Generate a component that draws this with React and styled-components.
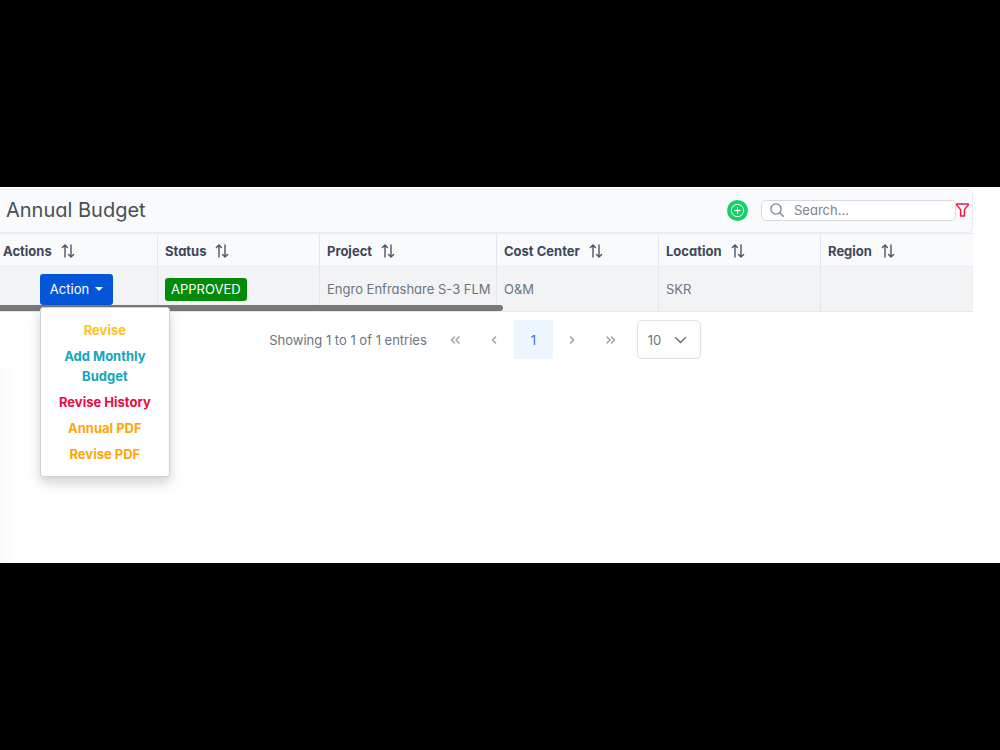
import React, { useState } from 'react';
import styled, { createGlobalStyle } from 'styled-components';

const GlobalStyle = createGlobalStyle`
  * {
    box-sizing: border-box;
  }
  body {
    margin: 0;
    background: #000;
    color: #6c757d;
    font-family: Inter, "Liberation Sans", sans-serif;
    font-size: 13px;
    font-feature-settings: "cv11";
  }
  button, input, select {
    font: inherit;
    font-feature-settings: inherit;
    color: inherit;
  }
`;

const Page = styled.div`
  display: flex;
  flex-direction: column;
  justify-content: center;
  min-height: 100vh;
`;

const Screen = styled.main`
  min-height: 376px;
  padding: 2px 27px 0 0;
  background: #fff;
  position: relative;
`;

const SideShadow = styled.div`
  position: absolute;
  left: 0;
  top: 180px;
  bottom: 0;
  width: 14px;
  background: linear-gradient(90deg, #fafafa, #fff);
`;

const Toolbar = styled.header`
  display: flex;
  align-items: center;
  height: 44px;
  padding: 0 3px 2px 6px;
  background: #f8fafc;
  border: 1px solid #e9ebee;
  border-left: 0;
  border-radius: 0 5px 5px 0;
`;

const Title = styled.h1`
  margin: 0 auto 0 0;
  font-size: 20px;
  line-height: 24px;
  font-weight: 400;
  color: #495057;
`;

const IconButton = styled.button`
  display: flex;
  padding: 0;
  border: 0;
  background: none;
  cursor: pointer;
`;

const AddButton = styled(IconButton)`
  align-items: center;
  justify-content: center;
  width: 21px;
  height: 21px;
  margin-right: 13px;
  border-radius: 50%;
  background: #13d163;
  color: #fff;
`;

const SearchBox = styled.label`
  display: flex;
  align-items: center;
  gap: 10px;
  width: 195px;
  height: 21px;
  padding: 0 8px;
  border: 1px solid #d5dae0;
  border-radius: 5px;
  background: #fff;
`;

const SearchInput = styled.input`
  flex: 1;
  min-width: 0;
  padding: 0;
  border: 0;
  outline: 0;
  background: none;
  &::placeholder {
    color: #7b838b;
    opacity: 1;
  }
`;

const TableWrap = styled.div`
  position: relative;
`;

const Table = styled.table`
  width: 100%;
  table-layout: fixed;
  border-collapse: separate;
  border-spacing: 0;
`;

const Col = styled.col`
  width: ${({ $width }) => $width ? `${$width}px` : 'auto'};
`;

const Th = styled.th`
  height: 34px;
  padding: 1px 0 0 ${({ $first }) => $first ? 3 : 7}px;
  border-top: 1px solid #e9ebee;
  border-right: ${({ $last }) => $last ? 0 : 1}px solid #e4e7eb;
  border-bottom: 1px solid #e9ebee;
  background: #f8fafc;
  color: #3f4859;
  font-weight: 700;
  text-align: left;
  white-space: nowrap;
`;

const SortLabel = styled.span`
  display: flex;
  align-items: center;
  gap: 9px;
`;

const Td = styled.td`
  height: 45px;
  padding: ${({ $center }) => $center ? '0 4px 0 0' : '0 0 0 7px'};
  border-right: ${({ $last }) => $last ? 0 : 1}px solid #e4e7eb;
  border-bottom: 1px solid #e4e7eb;
  background: #f2f3f5;
  text-align: ${({ $center }) => $center ? 'center' : 'left'};
  white-space: nowrap;
`;

const Badge = styled.span`
  display: inline-block;
  padding: 0 6px;
  border-radius: 3px;
  background: #028a0b;
  color: #fff;
  line-height: 23px;
`;

const Scrollbar = styled.div`
  position: absolute;
  left: 0;
  bottom: 1px;
  width: 503px;
  max-width: 100%;
  height: 6px;
  border-radius: 0 3px 3px 0;
  background: #77787a;
`;

const Dropdown = styled.div`
  display: inline-block;
  position: relative;
  vertical-align: middle;
`;

const ActionButton = styled.button`
  display: flex;
  align-items: center;
  gap: 6px;
  height: 31px;
  padding: 0 10px;
  border: 0;
  border-radius: 3px;
  background: #0456d8;
  color: #fff;
  cursor: pointer;
`;

const Caret = styled.span`
  border: 4px solid transparent;
  border-top-color: #fff;
  border-bottom: 0;
`;

const Menu = styled.div`
  position: absolute;
  z-index: 2;
  top: 100%;
  left: 0;
  width: 130px;
  margin-top: 2px;
  padding: 9px 0;
  border: 1px solid #cfd1d4;
  border-radius: 3px;
  background: #fff;
  box-shadow: 0 6px 12px rgba(0, 0, 0, 0.18);
  font-feature-settings: normal;
`;

const MenuItem = styled.button`
  display: block;
  width: 100%;
  padding: 3px 16px;
  border: 0;
  background: none;
  color: ${({ $color }) => $color};
  font-weight: 700;
  line-height: 20px;
  text-align: center;
  white-space: normal;
  cursor: pointer;
`;

const Paginator = styled.nav`
  display: flex;
  align-items: center;
  justify-content: center;
  padding: 8px 3px 8px 0;
`;

const Entries = styled.span`
  margin-right: 9px;
`;

const PageButton = styled.button`
  display: flex;
  align-items: center;
  justify-content: center;
  width: 39px;
  height: 39px;
  padding: 0;
  border: 0;
  background: ${({ $active }) => $active ? '#edf6ff' : 'none'};
  color: ${({ $active }) => $active ? '#3b70dc' : '#9a9fa7'};
  cursor: pointer;
`;

const SelectBox = styled.span`
  display: grid;
  align-items: center;
  margin-left: 6px;
  svg {
    grid-area: 1 / 1;
    justify-self: end;
    margin-right: 14px;
    pointer-events: none;
  }
`;

const Select = styled.select`
  grid-area: 1 / 1;
  width: 64px;
  height: 39px;
  padding: 0 0 0 10px;
  border: 1px solid #dde1e6;
  border-radius: 5px;
  background: #fff;
  appearance: none;
`;

const SortIcon = () => (
  <svg width="14" height="14" viewBox="0 0 14 14" fill="none" stroke="#4b5565" strokeWidth="1.4" strokeLinecap="round" strokeLinejoin="round">
    <path d="M4 13V1M1.4 3.4L4 .9l2.4 2.5M10 1v12M7.6 10.6l2.4 2.5 2.6-2.5" />
  </svg>
);

const PlusIcon = () => (
  <svg width="15" height="15" viewBox="0 0 15 15" fill="none" stroke="currentColor" strokeLinecap="round">
    <circle cx="7.5" cy="7.5" r="6.2" />
    <path d="M7.5 4.7v5.6M4.7 7.5h5.6" strokeWidth="1.2" />
  </svg>
);

const SearchIcon = () => (
  <svg width="14" height="14" viewBox="0 0 14 14" fill="none" stroke="#77808b" strokeWidth="1.3" strokeLinecap="round">
    <circle cx="6" cy="6" r="5.1" />
    <path d="M9.7 9.7l3.6 3.6" />
  </svg>
);

const FilterIcon = () => (
  <svg width="13" height="14" viewBox="0 0 13 14" fill="none" stroke="#f01842" strokeWidth="1.4" strokeLinejoin="round">
    <path d="M.7 1h11.6v1L8.4 6.6V13H4.6V6.6L.7 2z" />
  </svg>
);

const Chevron = ({ d, width = 12 }) => (
  <svg width={width} height="12" viewBox={`0 0 ${width} 12`} fill="none" stroke="currentColor" strokeWidth="1.5" strokeLinecap="round" strokeLinejoin="round">
    <path d={d} />
  </svg>
);

const columns = [
  { title: 'Actions', width: 158 },
  { title: 'Status', width: 162 },
  { title: 'Project', width: 177 },
  { title: 'Cost Center', width: 162 },
  { title: 'Location', width: 162 },
  { title: 'Region' },
];

const actions = [
  { title: 'Revise', color: '#ffc21f' },
  { title: 'Add Monthly Budget', color: '#10a7bb' },
  { title: 'Revise History', color: '#ea0c3f' },
  { title: 'Annual PDF', color: '#ffa50a' },
  { title: 'Revise PDF', color: '#ffa50a' },
];

export default function App() {
  const [open, setOpen] = useState(true);
  const [search, setSearch] = useState('');

  return (
    <Page>
      <GlobalStyle />
      <Screen>
        <SideShadow />
        <Toolbar>
          <Title>Annual Budget</Title>
          <AddButton aria-label="Add"><PlusIcon /></AddButton>
          <SearchBox>
            <SearchIcon />
            <SearchInput
              aria-label="Search"
              placeholder="Search..."
              value={search}
              onChange={e => setSearch(e.target.value)}
            />
          </SearchBox>
          <IconButton aria-label="Filter"><FilterIcon /></IconButton>
        </Toolbar>
        <TableWrap>
          <Table>
            <colgroup>
              {columns.map(col => <Col key={col.title} $width={col.width} />)}
            </colgroup>
            <thead>
              <tr>
                {columns.map((col, i) => (
                  <Th key={col.title} $first={i === 0} $last={i === columns.length - 1}>
                    <SortLabel>{col.title}<SortIcon /></SortLabel>
                  </Th>
                ))}
              </tr>
            </thead>
            <tbody>
              <tr>
                <Td $center>
                  <Dropdown>
                    <ActionButton aria-expanded={open} onClick={() => setOpen(!open)}>
                      Action<Caret />
                    </ActionButton>
                    {open && (
                      <Menu>
                        {actions.map(item => (
                          <MenuItem key={item.title} $color={item.color}>{item.title}</MenuItem>
                        ))}
                      </Menu>
                    )}
                  </Dropdown>
                </Td>
                <Td><Badge>APPROVED</Badge></Td>
                <Td>Engro Enfrashare S-3 FLM</Td>
                <Td>O&amp;M</Td>
                <Td>SKR</Td>
                <Td $last />
              </tr>
            </tbody>
          </Table>
          <Scrollbar />
        </TableWrap>
        <Paginator aria-label="Pagination">
          <Entries>Showing 1 to 1 of 1 entries</Entries>
          <PageButton aria-label="First page"><Chevron d="M5.5 3l-3 3 3 3M10 3L7 6l3 3" /></PageButton>
          <PageButton aria-label="Previous page"><Chevron d="M7.5 3l-3 3 3 3" /></PageButton>
          <PageButton $active>1</PageButton>
          <PageButton aria-label="Next page"><Chevron d="M4.5 3l3 3-3 3" /></PageButton>
          <PageButton aria-label="Last page"><Chevron d="M2 3l3 3-3 3M6.5 3l3 3-3 3" /></PageButton>
          <SelectBox>
            <Select aria-label="Rows per page" defaultValue="10">
              <option>10</option>
              <option>25</option>
              <option>50</option>
            </Select>
            <Chevron d="M1.5 3.5l5 5 5-5" width={13} />
          </SelectBox>
        </Paginator>
      </Screen>
    </Page>
  );
}
